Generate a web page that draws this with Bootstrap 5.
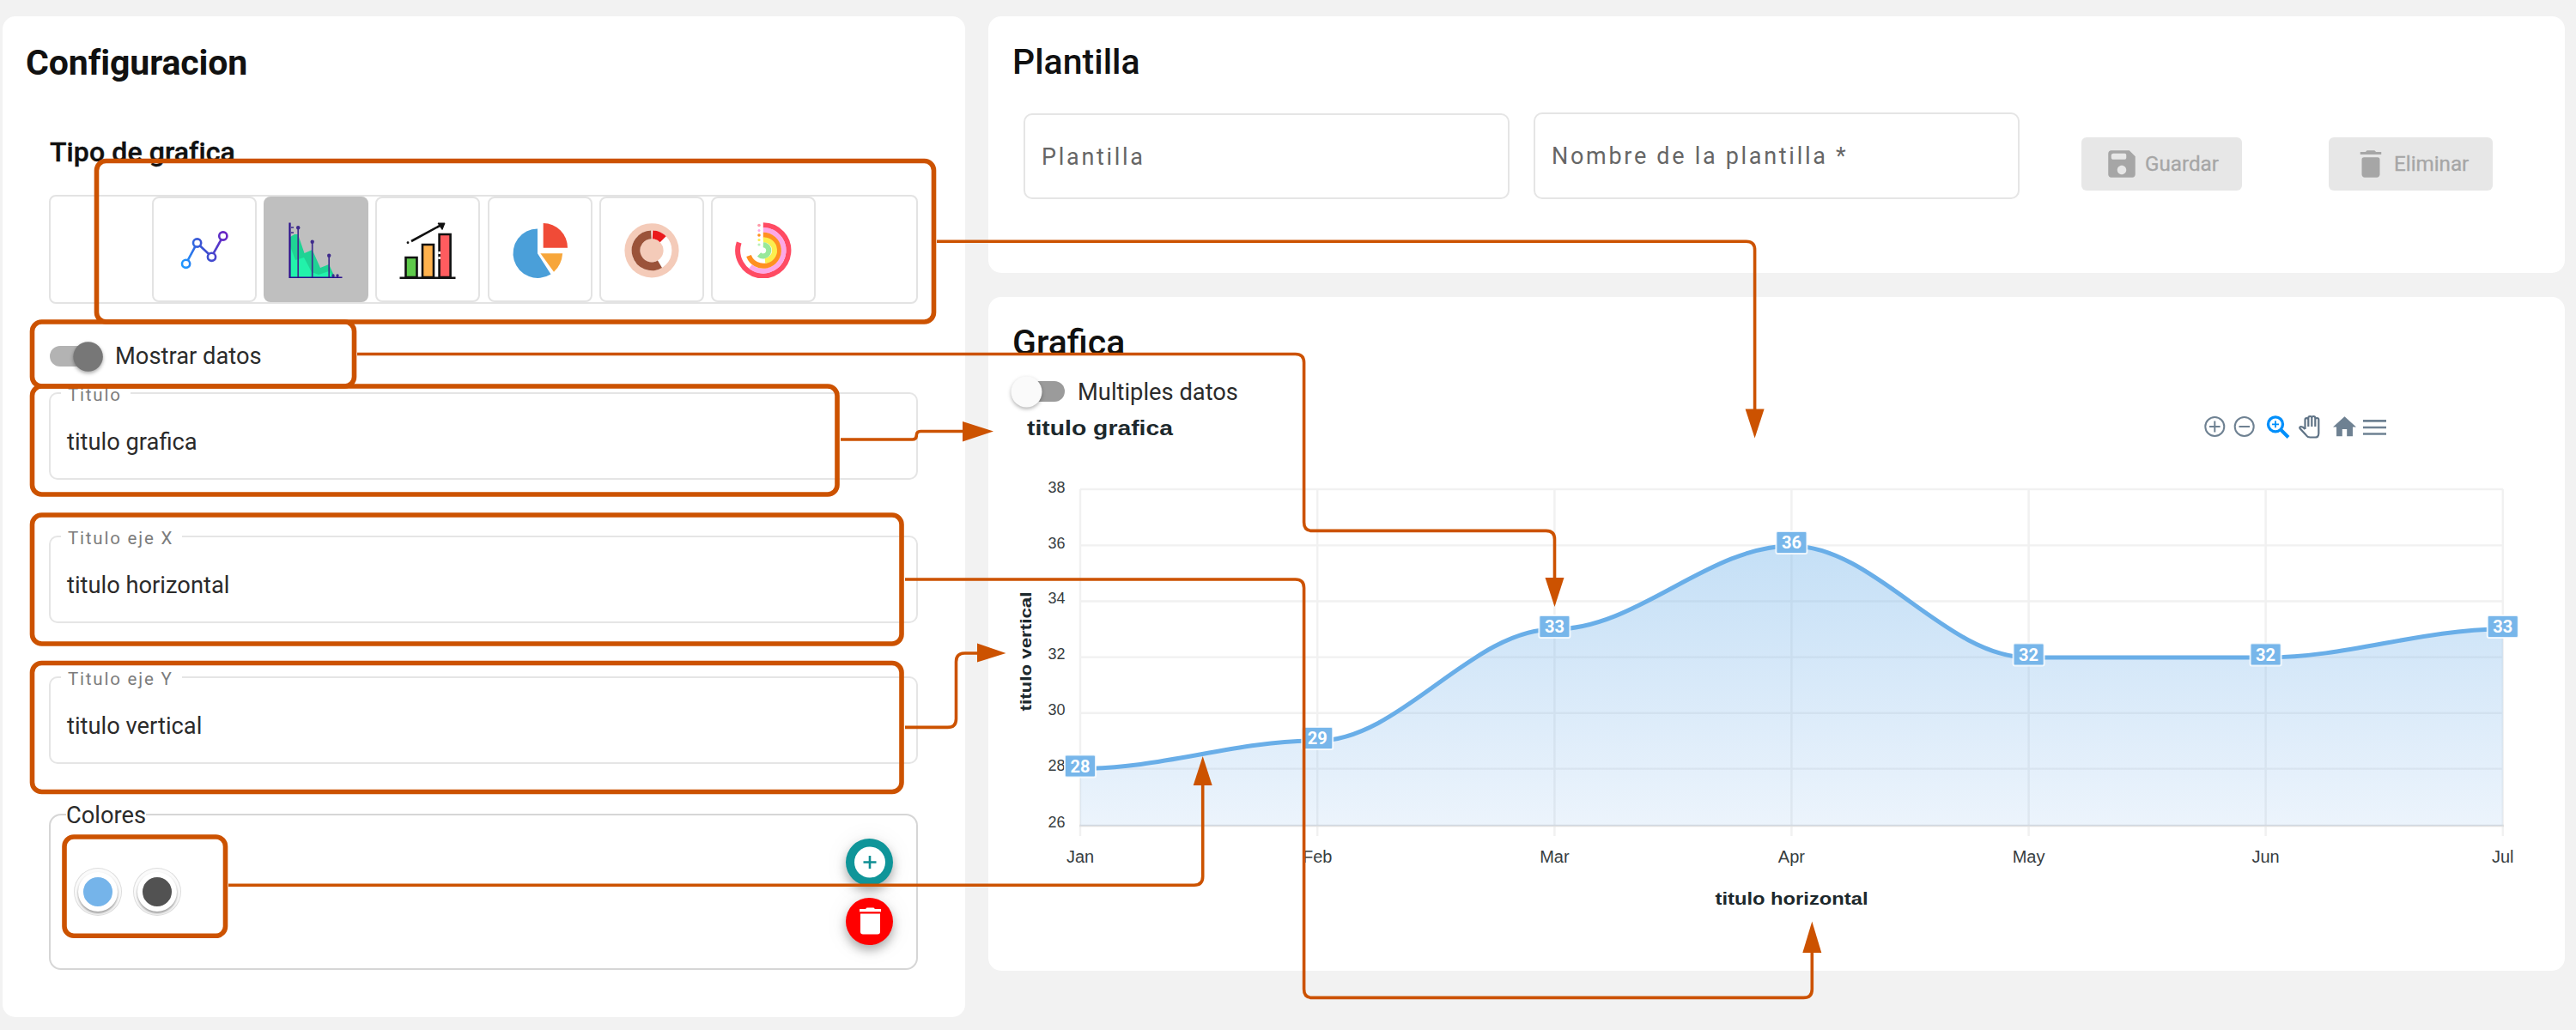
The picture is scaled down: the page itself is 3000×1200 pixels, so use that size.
<!DOCTYPE html>
<html lang="es">
<head>
<meta charset="utf-8">
<title>Configuracion de grafica</title>
<link href="https://cdn.jsdelivr.net/npm/bootstrap@5.3.0/dist/css/bootstrap.min.css" rel="stylesheet">
<style>
body{width:3000px;height:1200px;overflow:hidden;background:#f2f2f2;font-family:Roboto,"Liberation Sans",sans-serif;font-size:27.3px;color:#2b2b2b}
.page{padding:19px 0 0 3px;gap:27px}
.panel{background:#fff;border:0;border-radius:15px}
.panel-config{width:1121px;height:1166px;padding:32px 55px 0 54px}
.col-right{width:1836px;gap:28px}
.panel-template{height:299px;padding:31px 29px 0}
.panel-chart{height:785px;padding:0 0 0 29px}
.ttl{font-size:41px;line-height:44px;font-weight:500;color:#111;margin:0 0 0 -1px;white-space:nowrap}
.ttl-main{font-weight:700;margin-left:-27px;font-size:41px;letter-spacing:-.1px}
.subttl{font-size:32px;line-height:36px;font-weight:500;color:#111;letter-spacing:.1px;-webkit-text-stroke:.4px #111;margin:64px 0 32px 1px}
.types{height:127px;border:2px solid #e3e3e3;border-radius:8px;gap:8.4px;padding-left:1px}
.type-btn{width:122px;height:123px;border:2px solid #e3e3e3;border-radius:8px;background:#fff;padding:0}
.type-btn.active{background:#bfbfbf;border-color:#bfbfbf}
.type-btn svg{display:block;width:66px;height:66px}
.toggle-main{margin-top:43px}
.tgl{height:36px;gap:15px;line-height:36px}
.tgl svg{flex:none;overflow:visible}
.fld{position:relative;height:102px;border:2px solid #e5e5e5;border-radius:10px;padding:36px 0 0 19px;line-height:40px}
.fld .cap{position:absolute;left:12px;top:-12px;height:26px;line-height:26px;padding:0 10px 0 8px;background:#fff;font-size:20.5px;letter-spacing:1.8px;color:#7c7c7c}
.fld2{width:566px;border:2px solid #e5e5e5;border-radius:10px;padding-left:19px;font-size:27px;letter-spacing:2.7px;color:#666}
.colors{position:relative;height:182px;border:2px solid #d6d6d6;border-radius:14px}
.colors .cap2{position:absolute;left:18px;top:-16px;line-height:32px;background:#fff}
.sw{width:46px;height:46px;border:6px solid #fff;border-radius:50%;box-shadow:0 2px 3px rgba(0,0,0,.4),0 0 0 4px #fbfbfb,0 0 0 5px #ddd}
.fab{width:55px;height:55px;border-radius:50%;box-shadow:0 6px 12px rgba(0,0,0,.3),0 2px 30px rgba(0,0,0,.07)}
.abtn{height:62px;background:#e7e7e7;color:#a6a6a6;border:0;border-radius:6px;font-size:24.2px;font-weight:400;-webkit-text-stroke:.3px #a6a6a6;line-height:62px;padding:0;gap:6px}
.overlay{position:absolute;left:0;top:0;pointer-events:none}
</style>
<script src="https://cdn.jsdelivr.net/npm/bootstrap@5.3.0/dist/js/bootstrap.bundle.min.js"></script>
</head>
<body>
<div class="page d-flex align-items-start">
  <section class="card panel panel-config">
    <h1 class="ttl ttl-main">Configuracion</h1>
    <h2 class="subttl">Tipo de grafica</h2>
    <div class="types d-flex justify-content-center align-items-start">
      <button class="btn type-btn d-flex align-items-center justify-content-center" aria-label="Linea">
        <svg viewBox="205 259 66 66" fill="none" stroke-width="2.6"><defs><linearGradient id="lg" gradientUnits="userSpaceOnUse" x1="211" y1="300" x2="265" y2="280"><stop offset="0" stop-color="#1f97ff"/><stop offset=".5" stop-color="#3d4fd0"/><stop offset="1" stop-color="#6a24c4"/></linearGradient></defs><g stroke="url(#lg)"><circle cx="216.6" cy="308.3" r="4.6"/><circle cx="229.6" cy="284" r="4.6"/><circle cx="246.5" cy="300.3" r="4.6"/><circle cx="259.8" cy="276" r="4.6"/><path d="M218.8 304.2L227.4 288.1M232.8 287.3L243.2 297M248.6 296.2L257.6 280.1"/></g></svg>
      </button>
      <button class="btn type-btn active d-flex align-items-center justify-content-center" aria-label="Area">
        <svg viewBox="336 258 66 66"><path d="M339 276l5-3h4l7.500 22 9.200-4 9.300 21 10-4 7 15H339z" fill="#1fd394"/><path d="M339 287l6 16 10-3 9 17 8 3 12-4 6 8H339z" fill="#22f2aa"/><g stroke="#3f2b8c" stroke-width="1.700" fill="#3f2b8c"><path d="M348.200 265v58M364.700 282v41M384.200 298v25M389 320v3M394 320v3"/><path d="M340 265h3M340 271h3" /><g stroke="none"><circle cx="348.200" cy="265.300" r="2.200"/><circle cx="364.700" cy="281.700" r="2.200"/><circle cx="384.200" cy="297.700" r="2.200"/><circle cx="389" cy="321" r="1.700"/><circle cx="394" cy="321" r="1.700"/></g></g><path d="M338.500 259.500V323.500H399.500" fill="none" stroke="#2a0f8c" stroke-width="2.200"/></svg>
      </button>
      <button class="btn type-btn d-flex align-items-center justify-content-center" aria-label="Barras">
        <svg viewBox="466 258 66 66" overflow="visible" stroke="#111" stroke-width="2.600"><path d="M473.500 300h13v23h-13z" fill="#5fcb4b"/><path d="M493 285h13v38h-13z" fill="#ffb24d"/><path d="M512.600 273h13v50h-13z" fill="#ff5c5f"/><path d="M512.600 293v3M512.600 299v3" stroke="#fff"/><path d="M466.500 323.700H531.500M480 281L514 262.500" fill="none"/><path d="M511 260h8l-3 7.500z" fill="#111" stroke-width="1"/><circle cx="476" cy="282.700" r="1.400" fill="#111" stroke="none"/></svg>
      </button>
      <button class="btn type-btn d-flex align-items-center justify-content-center" aria-label="Circular">
        <svg viewBox="596 258 66 66" overflow="visible"><path d="M626 266.500A28.700 28.700 0 1 0 641.500 319.500L626 295.300z" fill="#4a9fd9"/><path d="M632.700 260A28.600 28.600 0 0 1 661 288.700H632.700z" fill="#f04b37"/><path d="M629.400 295.300H655.200Q654 309 645 316.700z" fill="#f7a63a"/></svg>
      </button>
      <button class="btn type-btn d-flex align-items-center justify-content-center" aria-label="Dona">
        <svg viewBox="727 258.500 66 66"><circle cx="760" cy="292.300" r="31.600" fill="#f4cbb9"/><g fill="none" stroke-width="9.800"><circle cx="760" cy="292.300" r="18.500" stroke="#fff"/><path d="M759.500 273.800A18.500 18.500 0 1 0 769.500 308.200" stroke="#9b533a"/><path d="M761 273.800A18.500 18.500 0 0 1 773.200 279.300" stroke="#ea1a1c"/></g></svg>
      </button>
      <button class="btn type-btn d-flex align-items-center justify-content-center" aria-label="Radial">
        <svg viewBox="857 258.500 66 66" fill="none" stroke-width="6"><path d="M889.800 262.700A29.600 29.600 0 1 1 861.700 283" stroke="#ff4b63"/><path d="M889.800 268.500A23.800 23.800 0 1 1 875 311" stroke="#fca8e6"/><path d="M889.800 274.300A18 18 0 1 1 873 298.500" stroke="#ff9020"/><path d="M889.800 280.100A12.200 12.200 0 0 1 892 304.400" stroke="#fbee4f"/><path d="M889.800 285.700A6.600 6.600 0 1 1 885 297" stroke="#98e89a"/><g stroke="none"><circle cx="885" cy="263" r="1.800" fill="#ff9aa8"/><circle cx="885" cy="269" r="1.500" fill="#fca8e6"/><circle cx="885" cy="274.500" r="1.800" fill="#ff9020"/><circle cx="885" cy="280" r="1.600" fill="#fbee4f"/><circle cx="885" cy="285.500" r="1.600" fill="#b9efb9"/></g></svg>
      </button>
    </div>
    <div class="tgl toggle-main d-flex align-items-center">
      <svg width="62" height="36"><rect x="1" y="6" width="50" height="24" rx="12" fill="#b3b3b3"/><circle cx="45.600" cy="18.500" r="17.300" fill="#777" style="filter:drop-shadow(0 2px 2px rgba(0,0,0,.35))"/></svg>
      <span>Mostrar datos</span>
    </div>
    <div class="fld" style="margin-top:24px"><span class="cap">Titulo</span><span>titulo grafica</span></div>
    <div class="fld" style="margin-top:65px"><span class="cap">Titulo eje X</span><span>titulo horizontal</span></div>
    <div class="fld" style="margin-top:62px"><span class="cap">Titulo eje Y</span><span>titulo vertical</span></div>
    <div class="colors d-flex justify-content-between" style="margin-top:58px">
      <span class="cap2">Colores</span>
      <div class="d-flex" style="gap:22.500px;padding:66px 0 0 32px">
        <span class="sw" style="background:#75b4ea"></span><span class="sw" style="background:#525252"></span>
      </div>
      <div class="d-flex flex-column" style="gap:14px;padding:27px 27px 0 0">
        <span class="fab" style="background:#0f9599"><svg width="55" height="55" class="d-block"><circle cx="28" cy="27.500" r="18" fill="#fff"/><path d="M28 20v15M20.500 27.500h15" stroke="#0f8f94" stroke-width="2.600"/></svg></span>
        <span class="fab" style="background:#f00"><svg width="55" height="55" class="d-block" fill="#fff"><path d="M17 18.500v21q0 3 3 3h17q3 0 3-3v-21z"/><path d="M16 13h7l1.500-1.500h8L34 13h7v3.300H16z"/></svg></span>
      </div>
    </div>
  </section>

  <div class="col-right d-flex flex-column">
    <section class="card panel panel-template">
      <h2 class="ttl">Plantilla</h2>
      <div class="d-flex align-items-end" style="margin:37px 0 0 12px">
        <div class="fld2" style="height:100px;line-height:98px">Plantilla</div>
        <div class="fld2" style="height:101px;line-height:98px;margin-left:28px">Nombre de la plantilla *</div>
        <button class="btn abtn d-flex align-items-center" style="width:187px;margin:0 0 10px 72px;padding-left:26px"><svg width="42" height="42" viewBox="0 0 24 24" fill="#a6a6a6"><path d="M17 3H5c-1.110 0-2 .9-2 2v14c0 1.100.89 2 2 2h14c1.100 0 2-.9 2-2V7l-4-4zm-5 16c-1.660 0-3-1.340-3-3s1.340-3 3-3 3 1.340 3 3-1.340 3-3 3zM14 9H6.500a1.500 1.500 0 0 1-1.500-1.500v-1A1.500 1.500 0 0 1 6.500 5H14a1 1 0 0 1 1 1v2a1 1 0 0 1-1 1z"/></svg><span>Guardar</span></button>
        <button class="btn abtn d-flex align-items-center" style="width:191px;margin:0 0 10px 101px;padding-left:28px"><svg width="42" height="42" viewBox="0 0 24 24" fill="#a6a6a6"><path d="M6 19c0 1.100.9 2 2 2h8c1.100 0 2-.9 2-2V9q0-1.500-1.500-1.500h-9Q6 7.500 6 9zM19 4h-3.500l-1-1h-5l-1 1H5v1.700h14V4z"/></svg><span>Eliminar</span></button>
      </div>
    </section>

    <section class="card panel panel-chart">
      <h2 class="ttl" style="margin-top:31px">Grafica</h2>
      <div class="tgl d-flex align-items-center" style="margin-top:19px">
        <svg width="60" height="36"><rect x="4" y="4" width="56" height="24" rx="12" fill="#9b9b9b"/><circle cx="15.500" cy="16.500" r="18" fill="#fafafa" style="filter:drop-shadow(0 2px 2px rgba(0,0,0,.3))"/></svg>
        <span style="margin-top:-3px">Multiples datos</span>
      </div>
      <svg width="1800" height="624" viewBox="1180 476 1800 624" font-family="'Liberation Sans',Arial,sans-serif" class="d-block">
        <defs><linearGradient id="ar" gradientUnits="userSpaceOnUse" x1="0" y1="636" x2="0" y2="962"><stop offset="0" stop-color="#77b6ea" stop-opacity=".43"/><stop offset="1" stop-color="#77b0ea" stop-opacity=".14"/></linearGradient></defs>
        <text x="1196" y="506.500" font-size="23" font-weight="700" fill="#1c282c" textLength="170" lengthAdjust="spacingAndGlyphs">titulo grafica</text>
        <g stroke="#6e8192" fill="none" stroke-width="2"><circle cx="2579.300" cy="497" r="11"/><path d="M2573 497h12.600M2579.300 490.500v13"/><circle cx="2613.700" cy="497" r="11"/><path d="M2607.500 497h12.500"/></g>
        <g stroke="#008ffb" fill="none" stroke-width="3.300"><circle cx="2650" cy="494.300" r="8.500"/><path d="M2656.500 501l8.500 8.500" stroke-width="4"/><path d="M2646 494.300h8M2650 490.300v8" stroke-width="1.800"/></g>
        <path d="M2684.500 500V489a1.900 1.900 0 0 1 3.800 0v8M2688.300 497V487a2 2 0 0 1 4 0v10M2692.300 497V487a2 2 0 0 1 4 0v10M2696.300 497V489a2 2 0 0 1 4 0M2700.300 489V505q0 4.500-4 4.500h-6q-3 0-5-3l-6.500-7q-1.500-2 1-2.500 2 0 4.700 3" fill="none" stroke="#5f7386" stroke-width="2.200"/>
        <path transform="translate(2714.300 481.200) scale(1.350)" d="M10 20v-6h4v6h5v-8h3L12 3 2 12h3v8z" fill="#6e8192"/>
        <path d="M2752 490.300h27M2752 498h27M2752 505.500h27" stroke="#6e8192" stroke-width="2.700"/>
        <g stroke="#f1f1f1" stroke-width="2.400" fill="none"><path d="M1258 570H2915M1258 635.400H2915M1258 700.500H2915M1258 765.600H2915M1258 830.700H2915M1258 895.600H2915"/><path d="M1258 570V974M1534.200 570V974M1810.400 570V974M2086.400 570V974M2362.600 570V974M2638.600 570V974M2914.800 570V974"/></g>
        <path d="M1257 962H2916" stroke="#e0e0e0" stroke-width="2.600"/>
        <path d="M1258 895.500C1354.600 895.500 1437.500 863 1534.200 863C1630.800 863 1713.700 733 1810.400 733C1907 733 1989.800 636 2086.400 636C2183 636 2266 766 2362.600 766C2459 766 2542 766 2638.600 766C2735 766 2818 733 2914.800 733V962H1258z" fill="url(#ar)"/>
        <path d="M1258 895.500C1354.600 895.500 1437.500 863 1534.200 863C1630.800 863 1713.700 733 1810.400 733C1907 733 1989.800 636 2086.400 636C2183 636 2266 766 2362.600 766C2459 766 2542 766 2638.600 766C2735 766 2818 733 2914.800 733" fill="none" stroke="#69aee8" stroke-width="5"/>
        <g font-size="18" fill="#373d3f" text-anchor="end"><text x="1240.500" y="573.600">38</text><text x="1240.500" y="638.500">36</text><text x="1240.500" y="702.500">34</text><text x="1240.500" y="767.800">32</text><text x="1240.500" y="833">30</text><text x="1240.500" y="898">28</text><text x="1240.500" y="963.500">26</text></g>
        <g fill="#77b6ea" stroke="#fff" stroke-width="2" stroke-opacity=".8"><rect x="1240" y="879.500" width="36" height="26" rx="2"/><rect x="1516.200" y="847" width="36" height="26" rx="2"/><rect x="1792.400" y="717" width="36" height="26" rx="2"/><rect x="2068.400" y="619" width="36" height="26" rx="2"/><rect x="2344.600" y="749.500" width="36" height="26" rx="2"/><rect x="2620.600" y="749.500" width="36" height="26" rx="2"/><rect x="2896.800" y="717" width="36" height="26" rx="2"/></g>
        <g font-family="Roboto,sans-serif" font-size="20" font-weight="700" fill="#fff" text-anchor="middle"><text x="1258" y="899.500">28</text><text x="1534.200" y="867">29</text><text x="1810.400" y="737">33</text><text x="2086.400" y="639">36</text><text x="2362.600" y="769.500">32</text><text x="2638.600" y="769.500">32</text><text x="2914.800" y="737">33</text></g>
        <g font-size="20" fill="#373d3f" text-anchor="middle"><text x="1258" y="1004.500">Jan</text><text x="1534.200" y="1004.500">Feb</text><text x="1810.400" y="1004.500">Mar</text><text x="2086.400" y="1004.500">Apr</text><text x="2362.600" y="1004.500">May</text><text x="2638.600" y="1004.500">Jun</text><text x="2914.800" y="1004.500">Jul</text></g>
        <text x="1997.500" y="1054" font-size="20" font-weight="700" fill="#1c282c" textLength="178" lengthAdjust="spacingAndGlyphs">titulo horizontal</text>
        <text transform="translate(1200.500 828.500) rotate(-90)" font-size="19" font-weight="700" fill="#1c282c" textLength="139" lengthAdjust="spacingAndGlyphs">titulo vertical</text>
      </svg>
    </section>
  </div>
</div>

<!-- Callouts linking each setting with the part of the chart it changes -->
<svg class="overlay" width="3000" height="1200" fill="none" stroke="#cc5200">
  <g stroke-width="5.600"><rect x="112.500" y="187.500" width="975" height="187.500" rx="11"/><rect x="37.500" y="375" width="375" height="75" rx="11"/><rect x="37.500" y="450" width="937.500" height="126" rx="11"/><rect x="37.500" y="600" width="1012.500" height="150" rx="11"/><rect x="37.500" y="772.500" width="1012.500" height="150" rx="11"/><rect x="75" y="975" width="187.500" height="115.300" rx="11"/></g>
  <g stroke-width="3.600">
    <path d="M1091 281.300H2033.600q10 0 10 10V478"/>
    <path d="M416 412.500H1508.600q10 0 10 10V608.400q0 10 10 10H1800.500q10 0 10 10V675"/>
    <path d="M979 512H1062.500q4.800 0 4.800-4.800 0-4.700 4.800-4.700H1122"/>
    <path d="M1054 675H1508.600q10 0 10 10V1152.400q0 10 10 10H2100.300q10 0 10-10V1109"/>
    <path d="M1054 847.400H1103.500q10 0 10-10V771q0-10 10-10H1140"/>
    <path d="M266 1031.300H1390.700q10 0 10-10V914"/>
  </g>
  <g fill="#cc5200" stroke="none"><path d="M2032.600 476.500h22l-11 34z"/><path d="M1799.500 673h22l-11 34z"/><path d="M1121 491v23.500l36-12z"/><path d="M2099.300 1110h22l-11-36.500z"/><path d="M1138 749.500v22l33.500-10.500z"/><path d="M1389.700 915h22l-11-34z"/></g>
</svg>
</body>
</html>
